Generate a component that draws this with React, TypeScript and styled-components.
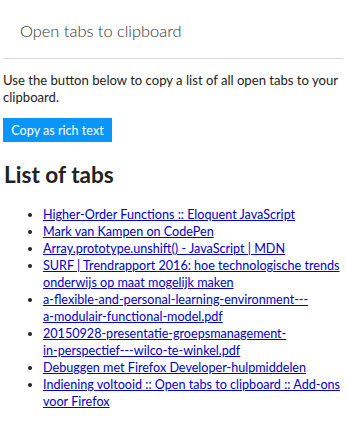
import React from "react";
import styled, { createGlobalStyle } from "styled-components";

const Global = createGlobalStyle`
  html, body { margin: 0; padding: 0; background: #fff; }
  body { font-family: Lato, "Open Sans", sans-serif; color: #222; }
`;

const Page = styled.div`
  padding: 0 3px;
`;

const Header = styled.header`
  padding: 19px 0 0 17px;
  height: 39px;
  border-bottom: 1px solid #d8d8d8;
`;

const Title = styled.h1`
  margin: 0;
  font-size: 16.4px;
  font-weight: 300;
  color: #333;
  line-height: 24px;
`;

const Intro = styled.p`
  margin: 13px 0 12px;
  font-size: 13.1px;
  line-height: 17px;
`;

const CopyButton = styled.button`
  display: block;
  width: 109px;
  height: 24px;
  padding: 0;
  border: none;
  background: #0996f8;
  color: #fff;
  font-family: inherit;
  font-size: 12.6px;
`;

const Heading = styled.h2`
  margin: 18px 0 16px 1px;
  font-size: 22.6px;
  font-weight: 700;
  color: #222;
  line-height: 30px;
`;

const TabList = styled.ul`
  margin: 0;
  padding-left: 40px;
  font-size: 12.6px;
  line-height: 17px;
`;

const TabLink = styled.a`
  color: #0000cc;
  text-decoration: underline;
`;

const Keep = styled.span`
  white-space: nowrap;
`;

type Part = string | { keep: string };

const tabs: Part[][] = [
  ["Higher-Order Functions :: Eloquent JavaScript"],
  ["Mark van Kampen on CodePen"],
  ["Array.prototype.unshift() - JavaScript | MDN"],
  ["SURF | Trendrapport 2016: hoe technologische trends onderwijs op maat mogelijk maken"],
  ["a-flexible-and-personal-learning-environment---", { keep: "a-modulair" }, "-functional-model.pdf"],
  ["20150928-presentatie-groepsmanagement-", { keep: "in-perspectief" }, "---wilco-te-winkel.pdf"],
  ["Debuggen met Firefox Developer-hulpmiddelen"],
  ["Indiening voltooid :: Open tabs to clipboard :: Add-ons voor Firefox"],
];

export default function App() {
  return (
    <Page>
      <Global />
      <Header>
        <Title>Open tabs to clipboard</Title>
      </Header>
      <Intro>Use the button below to copy a list of all open tabs to your clipboard.</Intro>
      <CopyButton>Copy as rich text</CopyButton>
      <Heading>List of tabs</Heading>
      <TabList>
        {tabs.map((parts, i) => (
          <li key={i}>
            <TabLink href="#">
              {parts.map((p, j) =>
                typeof p === "string" ? p : <Keep key={j}>{p.keep}</Keep>
              )}
            </TabLink>
          </li>
        ))}
      </TabList>
    </Page>
  );
}
